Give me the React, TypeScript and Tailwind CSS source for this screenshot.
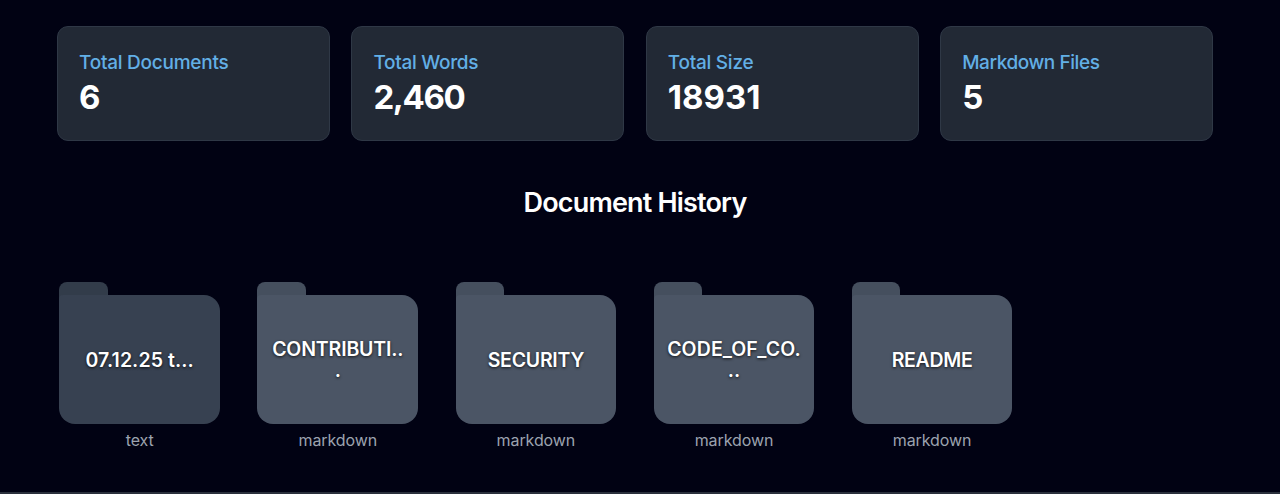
const stats = [
  { label: 'Total Documents', labelClass: 'tracking-[-0.25px]', value: '6', valueClass: '' },
  { label: 'Total Words', labelClass: 'tracking-[-0.3px]', value: '2,460', valueClass: 'tracking-[-1.35px]' },
  { label: 'Total Size', labelClass: 'tracking-[-0.25px]', value: '18931', valueClass: '' },
  { label: 'Markdown Files', labelClass: 'tracking-[-0.42px]', value: '5', valueClass: '' },
];

type Stat = (typeof stats)[number];
type Doc = { lines: string[]; type: 'text' | 'markdown'; nameClass: string };

const documents: Doc[] = [
  { lines: ['07.12.25 t...'], type: 'text', nameClass: 'tracking-[0.08px]' },
  { lines: ['CONTRIBUTI..', '.'], type: 'markdown', nameClass: 'tracking-[-0.15px]' },
  { lines: ['SECURITY'], type: 'markdown', nameClass: 'tracking-[-0.25px]' },
  { lines: ['CODE_OF_CO.', '..'], type: 'markdown', nameClass: 'tracking-[0.1px]' },
  { lines: ['README'], type: 'markdown', nameClass: 'tracking-[-0.3px]' },
];

function StatCard({ label, labelClass, value, valueClass }: Stat) {
  return (
    <div className="h-[115px] rounded-[11px] border border-[#2f3846] bg-[#222935] px-[21px] pt-[22px]">
      <div className={`text-[19px] leading-[28px] font-medium text-[#62afe6] ${labelClass}`}>{label}</div>
      <div className={`text-[33px] leading-[40px] font-bold text-white ${valueClass}`}>{value}</div>
    </div>
  );
}

function Folder({ doc }: { doc: Doc }) {
  const isText = doc.type === 'text';
  return (
    <div className="flex w-[160.6px] flex-col">
      <div className={`h-[18px] w-[48.3px] rounded-t-[8px] ${isText ? 'bg-[#323c4a]' : 'bg-[#454f5e]'}`} />
      <div
        className={`relative -mt-[5px] flex h-[129px] flex-col items-center justify-center rounded-[16px] rounded-tl-[4px] pt-[1px] text-center text-[19.5px] leading-[21px] font-semibold text-white [text-shadow:0_1px_3px_rgba(0,0,0,0.8)] ${doc.nameClass} ${isText ? 'bg-[#374151]' : 'bg-[#4b5565]'}`}
      >
        {doc.lines.map((line) => (
          <span key={line}>{line}</span>
        ))}
      </div>
      <div className="mt-[5px] text-center text-[16px] leading-[22px] tracking-[-0.1px] text-[#9ca3af]">{doc.type}</div>
    </div>
  );
}

export default function App() {
  return (
    <main className="flex h-[494px] flex-col overflow-hidden bg-[#010213] font-['Inter',sans-serif]">
      <section className="mt-[26px] ml-[57px] grid w-[1156px] grid-cols-4 gap-[21.5px]">
        {stats.map((s) => (
          <StatCard key={s.label} {...s} />
        ))}
      </section>
      <h2 className="mt-[42px] ml-[57px] w-[1156px] text-center text-[27px] leading-[40px] font-semibold tracking-[-0.82px] text-white">
        Document History
      </h2>
      <section className="mt-[59.4px] ml-[59.4px] flex gap-[37.5px]">
        {documents.map((d) => (
          <Folder key={d.lines[0]} doc={d} />
        ))}
      </section>
      <div className="mt-auto h-[2px] shrink-0 bg-[#2a303c]" />
    </main>
  );
}
